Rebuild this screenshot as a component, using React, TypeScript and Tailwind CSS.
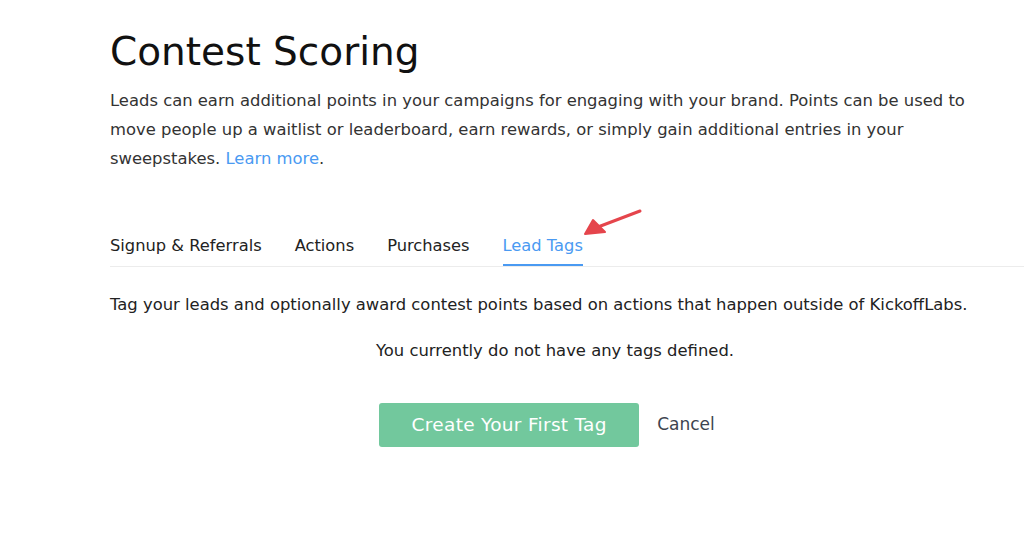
import React from 'react';

// ---------------------------------------------------------------------------
// Constants
// ---------------------------------------------------------------------------

const TABS = ['Signup & Referrals', 'Actions', 'Purchases', 'Lead Tags'];
const ACTIVE_TAB = 'Lead Tags';

// ---------------------------------------------------------------------------
// Arrow annotation
// ---------------------------------------------------------------------------

function RedArrow() {
  return (
    <svg
      className="pointer-events-none absolute left-[580px] top-[206px]"
      width="66"
      height="34"
      viewBox="0 0 66 34"
    >
      <path d="M60 5 L18 21" stroke="#e5454c" strokeWidth="3" strokeLinecap="round" />
      <path d="M5 28 L13 14 L25 26 Z" fill="#e5454c" stroke="#e5454c" strokeWidth="2" strokeLinejoin="round" />
    </svg>
  );
}

// ---------------------------------------------------------------------------
// Component
// ---------------------------------------------------------------------------

export default function App() {
  return (
    <div
      className="relative min-h-[558px] bg-white pl-[110px] pr-6 pt-[29px] text-[#222]"
      style={{ fontFamily: '"DejaVu Sans", Verdana, sans-serif' }}
    >
      {/* Header */}
      <h1 className="text-[39px] leading-[46px] text-[#111]">Contest Scoring</h1>
      <p className="mt-[11px] max-w-[880px] text-[16.4px] leading-[29px] text-[#333]">
        Leads can earn additional points in your campaigns for engaging with your brand. Points can be used to
        move people up a waitlist or leaderboard, earn rewards, or simply gain additional entries in your
        sweepstakes. <a className="text-[#4a9af2]">Learn more</a>.
      </p>

      {/* Tabs */}
      <div className="-mr-6 mt-[62px] flex gap-[33px] border-b border-[#ececec]">
        {TABS.map((tab) => (
          <div
            key={tab}
            className={
              tab === ACTIVE_TAB
                ? 'border-b-2 border-[#4a9af2] pb-[7px] text-[16.3px] leading-[22px] text-[#4a9af2]'
                : 'pb-[9px] text-[16.3px] leading-[22px] text-[#222]'
            }
          >
            {tab}
          </div>
        ))}
      </div>

      {/* Lead tags panel */}
      <p className="mt-[27px] text-[16.4px] leading-[22px] text-[#222]">
        Tag your leads and optionally award contest points based on actions that happen outside of KickoffLabs.
      </p>
      <p className="mt-[24px] text-center text-[16.4px] leading-[22px] text-[#222]">
        You currently do not have any tags defined.
      </p>

      <div className="mt-[41px] flex items-center justify-center gap-[18px]">
        <button
          type="button"
          className="h-[44px] w-[260px] rounded-[3px] bg-[#72c89d] text-[18.5px] tracking-[0.3px] text-white"
        >
          Create Your First Tag
        </button>
        <button type="button" className="pr-[16px] text-[17px] text-[#3d4450]">
          Cancel
        </button>
      </div>

      <RedArrow />
    </div>
  );
}
